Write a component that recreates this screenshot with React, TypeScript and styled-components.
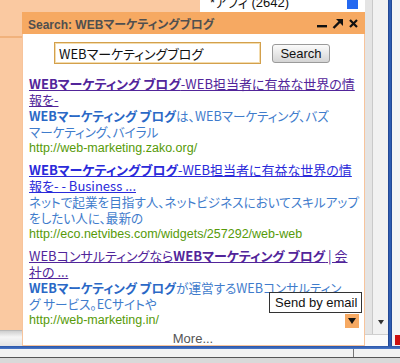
import React from 'react'
import styled, { createGlobalStyle } from 'styled-components'

const GlobalStyle = createGlobalStyle`
  html, body {
    margin: 0;
    padding: 0;
    overflow: hidden;
  }
  body {
    font-family: "Liberation Sans", "Noto Sans CJK JP", sans-serif;
  }
`

const Screen = styled.div`
  width: 400px;
  height: 363px;
  display: flex;
  flex-direction: column;
  overflow: hidden;
  background: #ececec;
`
const Viewport = styled.div`
  height: 346px;
  display: flex;
`
const Page = styled.div`
  position: relative;
  width: 365px;
  background: #fac9a1;
  display: flex;
  flex-direction: column;
`
const TopStrip = styled.div`
  height: 12px;
  margin-left: 200px;
  background: #fff;
  display: flex;
  justify-content: space-between;
  padding: 0 7px 0 10px;
  overflow: hidden;
`
const TagText = styled.span`
  font-size: 13px;
  line-height: 13px;
  margin-top: -4px;
  color: #111;
  font-family: "Liberation Sans", "Noto Sans CJK JP", sans-serif;
  font-feature-settings: "palt";
`
const BlueSquare = styled.div`
  width: 11px;
  height: 9px;
  background: #2468f0;
`
const LeftRule = styled.div`
  width: 22px;
  height: 2px;
  margin-top: 24px;
  background: #f1b27c;
`
const Filler = styled.div`
  flex: 1;
`
const HScroll = styled.div`
  height: 15px;
  background: linear-gradient(#cfcfcf, #f6f6f6 40%, #e4e4e4);
  border-top: 1px solid #b9b9b9;
`
const VScroll = styled.div`
  width: 23px;
  background: linear-gradient(to right, #e4e4e4 0 7px, #c9c9c9 7px 8px, #f1f1f1 8px);
  display: flex;
  flex-direction: column;
  justify-content: flex-end;
`
const ArrowCell = styled.div`
  height: 23px;
  display: flex;
  align-items: center;
  justify-content: flex-end;
  padding-right: 4px;
`
const CornerCell = styled.div`
  height: 11px;
  background: #fbfbfb;
  border-top: 1px solid #cfcfcf;
`
const Frame = styled.div`
  width: 4px;
  background: linear-gradient(to right, #1e3f86, #3466c0 50%, #1e3f86);
`
const Side = styled.div`
  flex: 1;
  background: #f4f4f4;
  display: flex;
  flex-direction: column;
  justify-content: flex-end;
  padding-bottom: 1px;
`
const RedMark = styled.div`
  width: 5px;
  height: 10px;
  margin-left: 3px;
  background: #cc1111;
`
const BlueRule = styled.div`
  height: 3px;
  background: linear-gradient(#2a55a8, #4a78c8);
`
const StatusBar = styled.div`
  flex: 1;
  display: flex;
  flex-direction: column;
  background: #d9d9d9;
`
const StatusTop = styled.div`
  height: 8px;
  background: #f2f2f2;
  border-bottom: 1px solid #555;
  display: flex;
`
const StatusCell = styled.div`
  width: 353px;
  border-right: 1px solid #777;
`

/* floating gadget window */
const Gadget = styled.div`
  position: absolute;
  left: 22px;
  top: 12px;
  width: 343px;
  height: 334px;
  display: flex;
  flex-direction: column;
`
const TitleBar = styled.div`
  height: 22px;
  flex: none;
  background: #f6a962;
  display: flex;
  align-items: center;
  padding: 0 7px 0 6px;
  font-size: 12px;
  font-weight: bold;
  color: #4f4f4f;
  font-feature-settings: "palt";
`
const Controls = styled.div`
  margin-left: auto;
  display: flex;
  align-items: center;
  gap: 5px;
`
const Body = styled.div`
  position: relative;
  flex: 1;
  background: #fff;
  border: 1px solid #f7c49c;
  border-top: none;
  padding: 8px 7px 0 6px;
  overflow: hidden;
`
const SearchRow = styled.div`
  display: flex;
  align-items: center;
  justify-content: center;
  gap: 11px;
  padding-right: 2px;
`
const QueryBox = styled.div`
  width: 207px;
  height: 22px;
  box-sizing: border-box;
  border: 1px solid #d3a04c;
  box-shadow: inset 0 0 0 1px #f3dcae;
  padding-left: 4px;
  display: flex;
  align-items: center;
  font-family: "Noto Sans CJK JP", sans-serif;
  font-feature-settings: "palt";
  font-size: 13px;
  color: #111;
`
const SearchButton = styled.div`
  width: 58px;
  height: 19px;
  box-sizing: border-box;
  border: 1px solid #9a9a9a;
  border-radius: 3px;
  background: linear-gradient(#fbfbfb, #e4e4e4 60%, #d4d4d4);
  display: flex;
  align-items: center;
  justify-content: center;
  font-size: 13px;
  color: #111;
`
const ResultList = styled.div`
  margin-top: 12px;
  display: flex;
  flex-direction: column;
  gap: 6px;
`
const Result = styled.div`
  white-space: nowrap;
  font-family: "Noto Sans CJK JP", sans-serif;
  font-feature-settings: "palt";
  font-size: 13px;
  line-height: 16px;
`
const ResultTitle = styled.div<{ $visited?: boolean }>`
  color: ${p => (p.$visited ? '#52259a' : '#2a2ada')};
  text-decoration: underline;
`
const Snippet = styled.div`
  font-size: 12.6px;
  color: #3f7ccc;
  b {
    color: #2a68c6;
  }
`
const Url = styled.div`
  font-family: "Liberation Sans", sans-serif;
  font-size: 12.5px;
  color: #569a08;
`
const More = styled.div`
  margin-top: 3px;
  text-align: center;
  font-size: 13px;
  line-height: 15px;
  color: #555;
`
const Tooltip = styled.div`
  position: absolute;
  left: 246px;
  top: 258px;
  height: 21px;
  box-sizing: border-box;
  padding: 0 4px 0 5px;
  border: 1px solid #333;
  background: #fff;
  display: flex;
  align-items: center;
  font-size: 13px;
  color: #111;
`
const ShareButton = styled.div`
  position: absolute;
  left: 322px;
  top: 280px;
  width: 14px;
  height: 14px;
  background: #f6a962;
  display: flex;
  align-items: center;
  justify-content: center;
`

const MinimizeIcon = () => (
  <svg width="10" height="10" viewBox="0 0 10 10">
    <rect x="0" y="7" width="10" height="2.4" fill="#111" />
  </svg>
)
const PopOutIcon = () => (
  <svg width="12" height="11" viewBox="0 0 12 11">
    <path d="M1.5 10 L9 2.5" stroke="#111" strokeWidth="2.4" />
    <path d="M4 1 H11 V8 Z" fill="#111" />
  </svg>
)
const CloseIcon = () => (
  <svg width="9" height="9" viewBox="0 0 9 9">
    <path d="M1 1 L8 8 M8 1 L1 8" stroke="#111" strokeWidth="2.2" />
  </svg>
)
const DownTriangle = ({ size = 7, color = '#111' }: { size?: number; color?: string }) => (
  <svg width={size} height={size * 0.75} viewBox="0 0 8 6">
    <path d="M0 0 H8 L4 6 Z" fill={color} />
  </svg>
)

export default function App() {
  return (
    <>
      <GlobalStyle />
      <Screen>
        <Viewport>
          <Page>
            <TopStrip>
              <TagText>*アフィ (2642)</TagText>
              <BlueSquare />
            </TopStrip>
            <LeftRule />
            <Filler />
            <HScroll />

            <Gadget>
              <TitleBar>
                <span>Search: WEBマーケティングブログ</span>
                <Controls>
                  <MinimizeIcon />
                  <PopOutIcon />
                  <CloseIcon />
                </Controls>
              </TitleBar>
              <Body>
                <SearchRow>
                  <QueryBox>WEBマーケティングブログ</QueryBox>
                  <SearchButton>Search</SearchButton>
                </SearchRow>

                <ResultList>
                  <Result>
                    <ResultTitle $visited>
                      <b>WEBマーケティング ブログ</b>-WEB担当者に有益な世界の情<br />報を-
                    </ResultTitle>
                    <Snippet>
                      <b>WEBマーケティング ブログ</b>は、WEBマーケティング、バズ<br />マーケティング、バイラル
                    </Snippet>
                    <Url>http://web-marketing.zako.org/</Url>
                  </Result>

                  <Result>
                    <ResultTitle>
                      <b>WEBマーケティングブログ</b>-WEB担当者に有益な世界の情<br />報を- - Business ...
                    </ResultTitle>
                    <Snippet>
                      ネットで起業を目指す人、ネットビジネスにおいてスキルアップ<br />をしたい人に、最新の
                    </Snippet>
                    <Url>http://eco.netvibes.com/widgets/257292/web-web</Url>
                  </Result>

                  <Result>
                    <ResultTitle $visited>
                      WEBコンサルティングなら<b>WEBマーケティング ブログ</b> | 会<br />社の ...
                    </ResultTitle>
                    <Snippet>
                      <b>WEBマーケティング ブログ</b>が運営するWEBコンサルティン<br />グ サービス。ECサイトや
                    </Snippet>
                    <Url>http://web-marketing.in/</Url>
                  </Result>
                </ResultList>

                <More>More...</More>

                <Tooltip>Send by email</Tooltip>
                <ShareButton>
                  <DownTriangle size={8} />
                </ShareButton>
              </Body>
            </Gadget>
          </Page>
          <VScroll>
            <ArrowCell>
              <DownTriangle size={6} color="#333" />
            </ArrowCell>
            <CornerCell />
          </VScroll>
          <Frame />
          <Side>
            <RedMark />
          </Side>
        </Viewport>
        <BlueRule />
        <StatusBar>
          <StatusTop>
            <StatusCell />
          </StatusTop>
        </StatusBar>
      </Screen>
    </>
  )
}
